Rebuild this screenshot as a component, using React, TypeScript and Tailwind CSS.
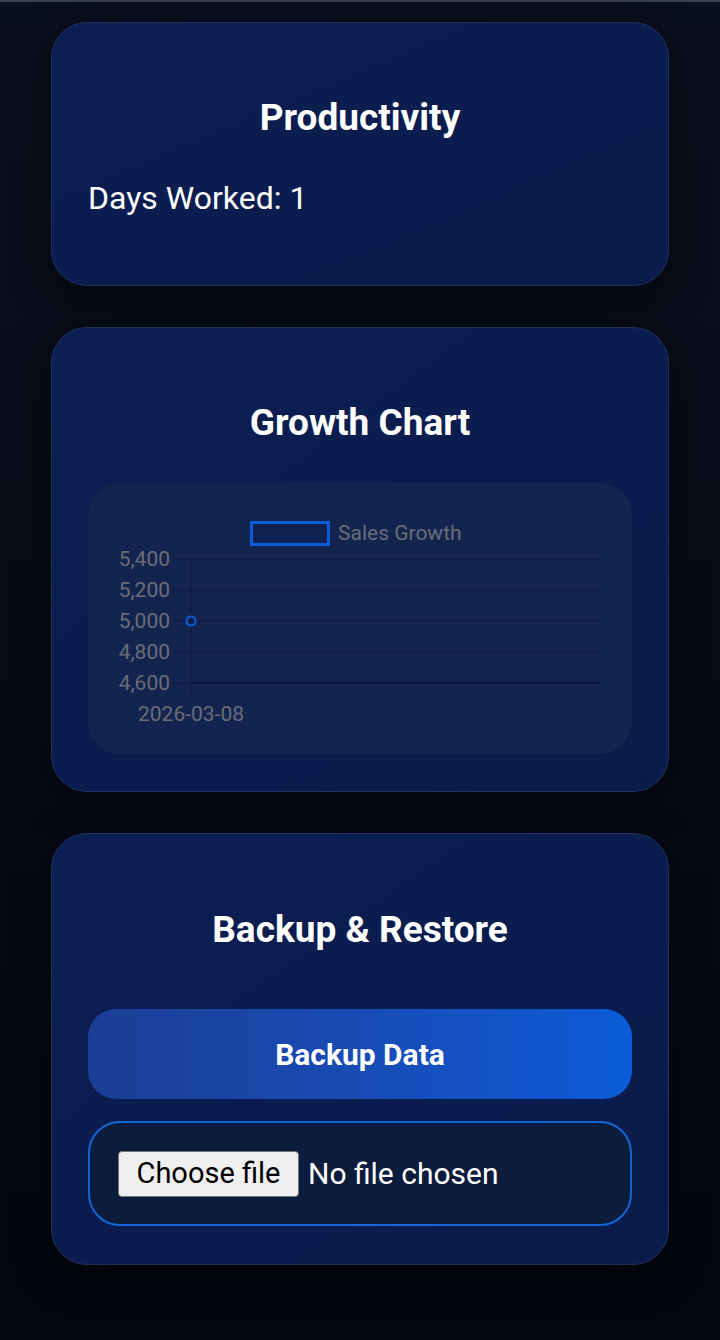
import type { ReactNode } from 'react';

const sans = 'font-[Roboto,"Liberation_Sans",sans-serif]';

function Card({ children, className }: { children: ReactNode; className?: string }) {
  return (
    <section
      className={`rounded-[36px] border border-[#1f3262] bg-[#0b1d4e] bg-gradient-to-br from-[#0c1f52] to-[#0a1b4b] px-[36px] pt-[36px] shadow-[0_10px_40px_rgba(0,0,0,0.45)] ${className ?? 'pb-[37px]'}`}
    >
      {children}
    </section>
  );
}

function CardTitle({ children, className }: { children: ReactNode; className?: string }) {
  return (
    <h2 className={`text-center text-[37px] font-bold leading-[40px] text-white ${className ?? 'mt-[39px]'}`}>
      {children}
    </h2>
  );
}

const yTicks = [
  { label: '5,400', y: 76 },
  { label: '5,200', y: 107 },
  { label: '5,000', y: 138 },
  { label: '4,800', y: 169 },
  { label: '4,600', y: 200 },
];

function GrowthChart() {
  return (
    <div className="mt-[40px] h-[271px] rounded-[32px] bg-[#13244f]">
      <svg width="544" height="271" viewBox="0 0 544 271" className="block">
        <g fontFamily='Roboto, "Liberation Sans", Arial, sans-serif' fontSize="21" fill="#6a6d78">
          <rect x="163.5" y="39.5" width="77" height="22" fill="#0f2150" stroke="#0b5cdb" strokeWidth="3" />
          <text x="250" y="57">Sales Growth</text>
          {yTicks.map((tick) => (
            <g key={tick.label}>
              <line x1="84" x2="512" y1={tick.y} y2={tick.y} stroke="#0e1b40" strokeWidth="1.2" />
              <text x="82" y={tick.y + 7}>
                <tspan textAnchor="end">{tick.label}</tspan>
              </text>
            </g>
          ))}
          <line x1="103" x2="103" y1="76" y2="216" stroke="#0e1b40" strokeWidth="1.2" />
          <line x1="103" x2="512" y1="200" y2="200" stroke="#0b1634" strokeWidth="1.4" />
          <circle cx="103" cy="138" r="4.5" fill="none" stroke="#0b5cdb" strokeWidth="2.2" />
          <text x="103" y="238" textAnchor="middle">
            2026-03-08
          </text>
        </g>
      </svg>
    </div>
  );
}

export default function App() {
  return (
    <main className={`min-h-[1340px] bg-gradient-to-b from-[#0a0f1c] via-[#070b16] to-[#03060e] ${sans}`}>
      <div className="h-[2px] bg-[#3a424c]" />
      <div className="flex flex-col gap-[41px] px-[51px] pb-[60px] pt-[20px]">
        <Card>
          <CardTitle>Productivity</CardTitle>
          <p className="mb-[33px] mt-[43px] text-[32px] leading-[34px] text-white">Days Worked: 1</p>
        </Card>

        <Card>
          <CardTitle>Growth Chart</CardTitle>
          <GrowthChart />
        </Card>

        <Card className="pb-[38px]">
          <CardTitle className="mt-[40px]">Backup &amp; Restore</CardTitle>
          <button
            type="button"
            className="mt-[59px] h-[90px] w-full rounded-[28px] bg-gradient-to-r from-[#1c3d94] to-[#0b5bd8] text-[30px] font-bold text-white"
          >
            Backup Data
          </button>
          <label className="mt-[22px] flex h-[105px] items-center rounded-[32px] border-2 border-[#1565d8] bg-[#0c1c3d] px-[28px]">
            <span className="flex h-[46px] w-[181px] items-center justify-center rounded-[4px] border-[1.5px] border-[#767676] bg-[#efefef] text-[29px] text-black">
              Choose file
            </span>
            <span className="ml-[9px] text-[30px] text-white">No file chosen</span>
          </label>
        </Card>
      </div>
    </main>
  );
}
